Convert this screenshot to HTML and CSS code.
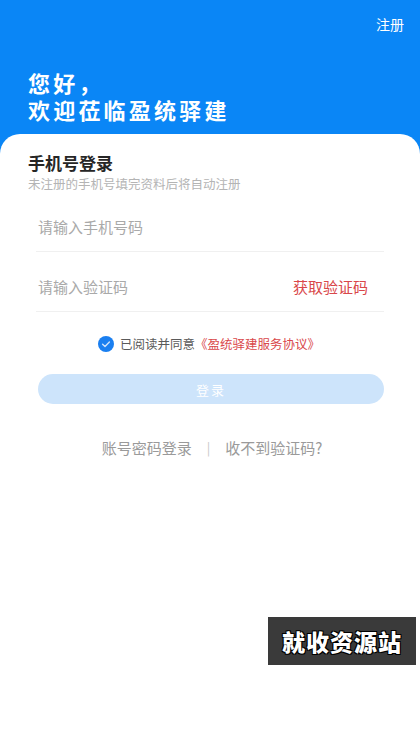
FILE: index.html
```html
<!DOCTYPE html>
<html lang="zh">
<head>
<meta charset="utf-8">
<link rel="stylesheet" href="styles.css">
</head>
<body>
<div class="page">
  <header class="hero">
    <div class="topbar"><span class="reg">注册</span></div>
    <h1 class="greet"><span>您好，</span><span>欢迎莅临盈统驿建</span></h1>
  </header>
  <main class="card">
    <h2 class="title">手机号登录</h2>
    <p class="sub">未注册的手机号填完资料后将自动注册</p>
    <div class="form">
      <div class="field"><span class="ph">请输入手机号码</span></div>
      <div class="field"><span class="ph">请输入验证码</span><span class="code">获取验证码</span></div>
    </div>
    <div class="agree">
      <span class="check"><svg width="16" height="16" viewBox="0 0 16 16"><circle cx="8" cy="8" r="8" fill="#1a7ff0"/><path d="M4.6 8.2 L7 10.4 L11.4 5.9" fill="none" stroke="#cfe3fb" stroke-width="1.4" stroke-linecap="round" stroke-linejoin="round"/></svg></span>
      <span class="agree-text">已阅读并同意</span><span class="link">《盈统驿建服务协议》</span>
    </div>
    <button class="login">登录</button>
    <div class="alt">
      <span>账号密码登录</span><span class="sep">|</span><span>收不到验证码?</span>
    </div>
    <div class="mark">就收资源站</div>
  </main>
</div>
</body>
</html>
```

FILE: styles.css
```css
* { box-sizing: border-box; margin: 0; padding: 0; }
html, body { width: 420px; height: 746px; overflow: hidden; }
body {
  font-family: "Noto Sans CJK SC", "Noto Sans", sans-serif;
  background: #0a86f6;
}
.page { display: flex; flex-direction: column; height: 746px; }
.hero {
  background: #0a86f6;
  height: 134px;
  padding: 0 16px 0 28px;
  display: flex;
  flex-direction: column;
}
.topbar { display: flex; justify-content: flex-end; padding-top: 14px; }
.reg { color: #fff; font-size: 14px; line-height: 20px; }
.greet {
  margin-top: 35px;
  display: flex;
  flex-direction: column;
  color: #fff;
  font-size: 22px;
  font-weight: 700;
  letter-spacing: 3.2px;
  line-height: 27px;
}
.card {
  flex: 1;
  background: #fff;
  border-radius: 20px 20px 0 0;
  padding: 18px 36px 0 28px;
  display: flex;
  flex-direction: column;
}
.title { font-size: 17px; font-weight: 700; color: #262626; line-height: 22px; }
.sub { margin-top: 2px; font-size: 12.5px; color: #b4b4b4; line-height: 16px; }
.form { padding-left: 8px; }
.field {
  height: 60px;
  display: flex;
  align-items: flex-end;
  justify-content: space-between;
  border-bottom: 1px solid #f0f0f0;
  padding: 0 16px 14px 2px;
  font-size: 15px;
  line-height: 20px;
}
.ph { color: #a9a9a9; }
.code { color: #d9474a; }
.agree {
  margin-top: 22px;
  display: flex;
  align-items: center;
  justify-content: center;
  padding-left: 6px;
  font-size: 12.5px;
  line-height: 20px;
}
.check { display: flex; margin-right: 6px; }
.agree-text { color: #5a5a5a; }
.link { color: #d9474a; }
.login {
  margin: 20px 0 0 10px;
  height: 30px;
  border: none;
  border-radius: 15px;
  background: #cde4fb;
  color: #fff;
  font-family: inherit;
  font-size: 13px;
  letter-spacing: 2px;
}
.alt {
  margin-top: 34px;
  display: flex;
  justify-content: center;
  align-items: center;
  padding-left: 12px;
  font-size: 15px;
  color: #9a9a9a;
  line-height: 20px;
}
.sep { margin: 0 15px; color: #c8c8c8; font-size: 13px; }
.mark {
  align-self: flex-end;
  margin: 159px -32px 0 0;
  width: 148px;
  height: 48px;
  background: #3a3a3a;
  color: #fff;
  font-size: 23px;
  font-weight: 900;
  display: flex;
  align-items: center;
  justify-content: center;
  letter-spacing: 1px;
  text-shadow: 1px 1px 0 #000, -1px -1px 0 #000, 1px -1px 0 #000, -1px 1px 0 #000;
}
```
